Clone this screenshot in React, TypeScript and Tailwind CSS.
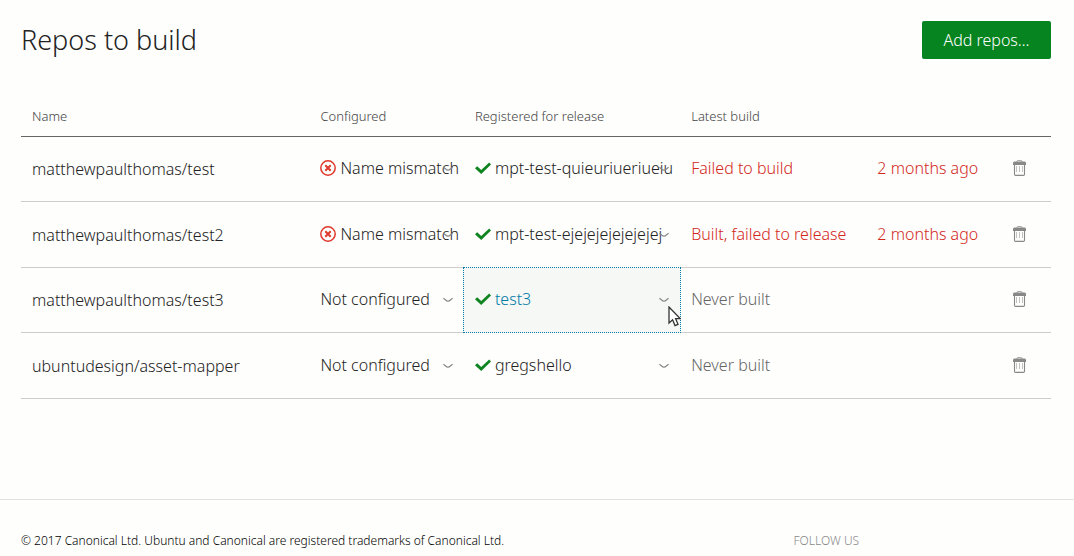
import type { ReactNode } from 'react';

type Repo = {
  name: string;
  configured: string;
  mismatch?: boolean;
  registered: string;
  active?: boolean;
  build: string;
  time?: string;
};

const repos: Repo[] = [
  { name: 'matthewpaulthomas/test', configured: 'Name mismatch', mismatch: true, registered: 'mpt-test-quieuriueriueiu', build: 'Failed to build', time: '2 months ago' },
  { name: 'matthewpaulthomas/test2', configured: 'Name mismatch', mismatch: true, registered: 'mpt-test-ejejejejejejejej', build: 'Built, failed to release', time: '2 months ago' },
  { name: 'matthewpaulthomas/test3', configured: 'Not configured', registered: 'test3', active: true, build: 'Never built' },
  { name: 'ubuntudesign/asset-mapper', configured: 'Not configured', registered: 'gregshello', build: 'Never built' },
];

function ErrorIcon() {
  return (
    <svg viewBox="0 0 16 16" className="size-4 shrink-0" fill="none" stroke="#df382c" aria-hidden="true">
      <circle cx="8" cy="8" r="7.2" strokeWidth="1.5" />
      <path d="M5.3 5.3l5.4 5.4M10.7 5.3l-5.4 5.4" strokeWidth="2" />
    </svg>
  );
}

function TickIcon() {
  return (
    <svg viewBox="0 0 16 16" className="size-4 shrink-0" aria-hidden="true">
      <path d="M0 8.2L2.2 6.2L6.2 10L14.2 2.4L16 4.4L6.2 14Z" fill="#0e8420" />
    </svg>
  );
}

function Chevron() {
  return (
    <svg viewBox="0 0 10 6" className="absolute right-[11px] top-1/2 h-[6px] w-[10px] -translate-y-1/2" fill="none" stroke="#888" strokeWidth="1.2" aria-hidden="true">
      <path d="M0.4 1.2C2 2.2 3.4 4.2 5 4.2S8 2.2 9.6 1.2" />
    </svg>
  );
}

function TrashIcon() {
  return (
    <svg viewBox="0 0 14 16" className="h-4 w-[14px]" fill="none" aria-hidden="true">
      <path d="M4 2V1.2Q4 0.5 5 0.5H8Q9 0.5 9 1.2V2" stroke="#aaa" />
      <path d="M0 5V3Q0 1.6 2 1.6H11Q13 1.6 13 3V5Z" fill="#888" />
      <path d="M1.5 4.5V14.2Q1.5 15.4 2.6 15.4H10.4Q11.5 15.4 11.5 14.2V4.5" stroke="#888" strokeWidth="1.1" />
      <path d="M3.5 6V12M6.5 6V12M9.5 6V12" stroke="#bbb" strokeWidth="0.9" />
    </svg>
  );
}

function Pointer() {
  return (
    <svg viewBox="0 0 13 21" className="absolute right-[-1px] bottom-[5px] z-10 h-[21px] w-[13px]" aria-hidden="true">
      <path d="M1 1V17L4.6 13.8L7 19.6L10 18.3L7.6 12.6H12.2Z" fill="#fff" stroke="#333" strokeWidth="1.3" />
    </svg>
  );
}

function MenuCell({ icon, children, active }: { icon?: ReactNode; children: string; active?: boolean }) {
  return (
    <td className="relative border-b border-[#cdcdcd] p-0">
      <button
        type="button"
        aria-haspopup="menu"
        className={
          active
            ? 'absolute -inset-px flex items-center gap-1 border border-dotted border-[#007aa6] bg-[#f6f8f5] px-[11px] pb-0.5 text-left whitespace-nowrap text-[#007aa6]'
            : 'absolute inset-0 flex items-center gap-1 px-[11px] pb-0.5 text-left whitespace-nowrap'
        }
      >
        {icon}
        <span>{children}</span>
        <Chevron />
      </button>
      {active && <Pointer />}
    </td>
  );
}

export default function App() {
  return (
    <div className="min-h-screen bg-[#fefefd] font-['Noto_Sans',sans-serif] text-base leading-6 font-light text-[#222]">
      <main className="pt-[21px] pr-[23px] pl-[21px]">
        <header className="flex items-center justify-between">
          <h1 className="text-[27px] leading-[38px]">Repos to build</h1>
          <button type="button" className="h-[38px] min-w-[129px] rounded-[2px] bg-[#05841f] px-5 text-white">
            Add repos…
          </button>
        </header>
        <table className="mt-[38px] w-full table-fixed border-separate border-spacing-0">
          <colgroup>
            <col className="w-[28%]" />
            <col className="w-[15%]" />
            <col className="w-[21%]" />
            <col className="w-[30%]" />
            <col className="w-[6%]" />
          </colgroup>
          <thead>
            <tr className="h-10 text-left text-[13px] text-[#444]">
              <th className="border-b border-[#666] px-[11px] pt-0 pb-0.5 font-light">Name</th>
              <th className="border-b border-[#666] px-[11px] pt-0 pb-0.5 font-light">Configured</th>
              <th className="border-b border-[#666] px-[11px] pt-0 pb-0.5 font-light">Registered for release</th>
              <th className="border-b border-[#666] px-[11px] pt-0 pb-0.5 font-light">Latest build</th>
              <td className="border-b border-[#666] p-0" />
            </tr>
          </thead>
          <tbody>
            {repos.map((repo) => (
              <tr key={repo.name} className="h-[65px] even:h-[66px]">
                <td className="border-b border-[#cdcdcd] px-[11px] py-0">{repo.name}</td>
                <MenuCell icon={repo.mismatch && <ErrorIcon />}>{repo.configured}</MenuCell>
                <MenuCell icon={<TickIcon />} active={repo.active}>
                  {repo.registered}
                </MenuCell>
                <td className="border-b border-[#cdcdcd] px-[11px] pt-0 pb-0.5">
                  <div className={repo.time ? 'flex justify-between text-[#d3281c]' : 'text-[#666]'}>
                    <span>{repo.build}</span>
                    {repo.time && <span>{repo.time}</span>}
                  </div>
                </td>
                <td className="border-b border-[#cdcdcd] p-0 pb-0.5">
                  <button type="button" aria-label={'Remove ' + repo.name} className="mx-auto block">
                    <TrashIcon />
                  </button>
                </td>
              </tr>
            ))}
          </tbody>
        </table>
      </main>
      <footer className="mt-[100px] flex border-t border-[#e2e2e2] pt-[29px] pr-[23px] pl-[21px] text-[12px]">
        <p className="w-3/4 text-black">© 2017 Canonical Ltd. Ubuntu and Canonical are registered trademarks of Canonical Ltd.</p>
        <h2 className="text-[#888]">FOLLOW US</h2>
      </footer>
    </div>
  );
}
